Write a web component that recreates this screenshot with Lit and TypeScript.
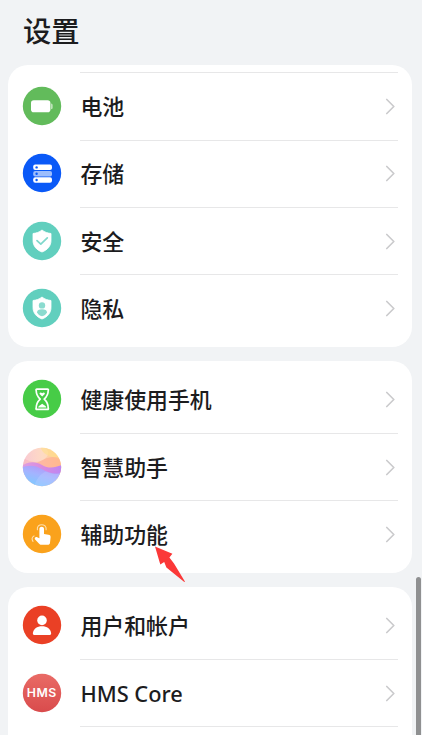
import { LitElement, html, css, svg, type TemplateResult } from "lit";
import { customElement, property } from "lit/decorators.js";

const SHIELD = "M19 8C21.5 10.1 24.8 11.2 28 11.5V18.5C28 24.2 24.3 28 19 30C13.7 28 10 24.2 10 18.5V11.5C13.2 11.2 16.5 10.1 19 8Z";

const icons: Record<string, TemplateResult> = {
  battery: svg`
    <circle cx="19" cy="19" r="19.2" fill="#62bb5b"/>
    <rect x="8" y="13.2" width="19.4" height="12" rx="2.8" fill="#fff"/>
    <path d="M28.1 16.6C29.2 16.8 29.6 17.4 29.6 18.4V20.4C29.6 21.4 29.2 22 28.1 22.2Z" fill="#c9e8c6"/>`,
  storage: svg`
    <circle cx="19" cy="19" r="19.2" fill="#0a59f7"/>
    <rect x="10.2" y="10.6" width="18.8" height="5.5" rx="2" fill="#fff"/>
    <rect x="10.2" y="16.9" width="18.8" height="5.5" rx="2" fill="#9dbdfc"/>
    <rect x="10.2" y="23.2" width="18.8" height="5.5" rx="2" fill="#fff"/>
    <g fill="#0a59f7"><circle cx="13.6" cy="13.4" r="1.2"/><circle cx="13.6" cy="19.7" r="1.2"/><circle cx="13.6" cy="26" r="1.2"/></g>`,
  security: svg`
    <circle cx="19" cy="19" r="19.2" fill="#61cfbe"/>
    <path d=${SHIELD} fill="#fff" stroke="#fff" stroke-width=".8" stroke-linejoin="round"/>
    <path d="M14 18.6L17.8 22.1L24.3 15.8" fill="none" stroke="#7fd8cb" stroke-width="1.7" stroke-linecap="round" stroke-linejoin="round"/>`,
  privacy: svg`
    <circle cx="19" cy="19" r="19.2" fill="#61cfbe"/>
    <path d=${SHIELD} fill="#fff" stroke="#fff" stroke-width=".8" stroke-linejoin="round"/>
    <circle cx="19" cy="16.4" r="3.2" fill="#8bdbcf"/>
    <path d="M14 23.4C14 21.2 16 20.2 19 20.2S24 21.2 24 23.4C23 25.4 21.2 26.7 19 27.3C16.8 26.7 15 25.4 14 23.4Z" fill="#8bdbcf"/>`,
  hourglass: svg`
    <circle cx="19" cy="19" r="19.2" fill="#47cc47"/>
    <path d="M14 9.2H24.4C25.4 9.2 25.6 9.8 25.2 10.6C25.2 14.6 24 16.6 21.2 19.2C24 21.8 25.2 23.9 25.2 28C25.6 28.8 25.4 29.4 24.4 29.4H14C13 29.4 12.8 28.8 13.2 28C13.2 23.9 14.4 21.8 17.2 19.2C14.4 16.6 13.2 14.6 13.2 10.6C12.8 9.8 13 9.2 14 9.2Z" fill="none" stroke="#fff" stroke-width="1.7" stroke-linejoin="round"/>
    <path d="M19.2 16.6L16.8 14.2C15.8 12.8 17.8 11.7 19.2 13.2C20.6 11.7 22.6 12.8 21.6 14.2Z" fill="#fff"/>
    <path d="M15.1 27.6C15.6 25.7 17.4 25.1 19.2 23.8C21 25.1 22.8 25.7 23.3 27.6Z" fill="#fff"/>`,
  assistant: svg`
    <defs>
      <linearGradient id="sky" x1="0" y1=".3" x2="1" y2="0.2"><stop offset="0" stop-color="#f7b9c8"/><stop offset=".5" stop-color="#fdcfb4"/><stop offset="1" stop-color="#ffcf88"/></linearGradient>
      <linearGradient id="ribbon" x1="0" y1="0" x2="1" y2="0"><stop offset="0" stop-color="#dfa0e0"/><stop offset=".5" stop-color="#d98be0"/><stop offset="1" stop-color="#b985f5"/></linearGradient>
      <linearGradient id="sea" x1=".8" y1="0" x2=".3" y2="1"><stop offset="0" stop-color="#ba8ef6"/><stop offset=".45" stop-color="#a3b4ff"/><stop offset="1" stop-color="#72d2ff"/></linearGradient>
      <clipPath id="orb"><circle cx="19" cy="19" r="19.2"/></clipPath>
      <filter id="soft" x="-10%" y="-10%" width="120%" height="120%"><feGaussianBlur stdDeviation=".7"/></filter>
    </defs>
    <g clip-path="url(#orb)">
      <rect x="-1" y="-1" width="40" height="40" fill="url(#sky)"/>
      <g filter="url(#soft)">
        <ellipse cx="12" cy="5" rx="13" ry="9" fill="#fff" opacity=".22"/>
        <path d="M17 -3C18 6 26 9 41 12V-3Z" fill="#ffe08a" opacity=".6"/>
        <path d="M13 15C19 13 23 9 30 9C34 9 37 10 41 12V21H13Z" fill="#ffa48f" opacity=".5"/>
        <path d="M-3 18.5C6 13 12 13 19 17C26 21 32 20 41 16V32H-3Z" fill="url(#ribbon)"/>
        <path d="M-3 20C6 16.5 12 17 19 21C26 25.5 33 27 41 24V42H-3Z" fill="url(#sea)"/>
        <path d="M10 42C13 31 17 26 23 23.5C29 26.5 34 27 41 24V42Z" fill="#c3d0ff" opacity=".3"/>
      </g>
    </g>`,
  touch: svg`
    <circle cx="19" cy="19" r="19.2" fill="#faa21c"/>
    <path d="M16.4 23.2V13.8C16.4 10.9 21 10.9 21 13.8V19.1L25.4 19.7C27.1 19.9 27.8 20.8 27.6 22.5L27 27.7C26.8 29.1 26.1 29.8 24.7 29.8H18.4C17.3 29.8 16.6 29.4 15.9 28.5L12.1 24.4C11 22.9 12.6 21.6 14.2 22.3Z" fill="#fff"/>
    <path d="M14.4 14.8C13.1 8 24.2 8 23.1 14.8" fill="none" stroke="#fff" stroke-opacity=".65" stroke-width="1.1" stroke-linecap="round"/>
    <path d="M11 20.9C8.8 22 8.5 24.3 10 26.4" fill="none" stroke="#fff" stroke-opacity=".65" stroke-width="1.1" stroke-linecap="round"/>`,
  user: svg`
    <circle cx="19" cy="19" r="19.2" fill="#ea4025"/>
    <circle cx="19" cy="14.4" r="4.8" fill="#fff"/>
    <path d="M9.9 27C10.5 22.6 14 20.2 19 20.2S27.5 22.6 28.1 27C28.2 28.4 27.6 29 26.3 29H11.7C10.4 29 9.8 28.4 9.9 27Z" fill="#fff"/>`,
  hms: svg`
    <defs><linearGradient id="coral" x1="0" y1="0" x2="0" y2="1"><stop offset="0" stop-color="#e96b66"/><stop offset="1" stop-color="#d94b4c"/></linearGradient></defs>
    <circle cx="19" cy="19" r="19.2" fill="url(#coral)"/>
    <text class="hms" x="3.8" y="23.4" textLength="29.8" lengthAdjust="spacingAndGlyphs">HMS</text>`,
};

@customElement("setting-row")
class SettingRow extends LitElement {
  @property() icon = "";
  @property() label = "";

  static styles = css`
    :host { display: flex; align-items: center; height: 67.35px; padding: 0 14px 0 15px; box-sizing: border-box; }
    .icon { flex: none; width: 38px; height: 38px; overflow: visible; }
    .body { flex: 1; align-self: stretch; display: flex; align-items: center; justify-content: space-between; margin-left: 19px; padding-left: .4px; border-top: 1px solid transparent; }
    :host([divided]) .body { border-top-color: #e7e7e8; }
    .label { padding-bottom: 1.2px; font-size: 21.9px; line-height: 30px; font-weight: 500; color: #1c1c1e; white-space: nowrap; }
    .latin { padding: 1px 0 0; font-family: "Noto Sans", sans-serif; font-size: 21.8px; }
    .chevron { width: 10px; height: 17px; margin-right: 2.4px; }
    .hms { font: 600 11.4px Inter, sans-serif; letter-spacing: .4px; fill: #fff; }
  `;

  render() {
    const latin = /^[\x00-\x7f]+$/.test(this.label);
    return html`
      <svg class="icon" viewBox="0 0 38 38" aria-hidden="true">${icons[this.icon]}</svg>
      <div class="body">
        <span class="label ${latin ? "latin" : ""}">${this.label}</span>
        <svg class="chevron" viewBox="0 0 10 17" aria-hidden="true">
          <path d="M1.8 1.5L8.8 8.5L1.8 15.5" fill="none" stroke="#cbcbcd" stroke-width="1.7" stroke-linecap="round" stroke-linejoin="round"/>
        </svg>
      </div>`;
  }
}

const groups = [
  [["battery", "电池"], ["storage", "存储"], ["security", "安全"], ["privacy", "隐私"]],
  [["hourglass", "健康使用手机"], ["assistant", "智慧助手"], ["touch", "辅助功能"]],
  [["user", "用户和帐户"], ["hms", "HMS Core"], ["", ""]],
];

@customElement("app-root")
class AppRoot extends LitElement {
  static styles = css`
    :host { display: block; position: relative; height: 735px; overflow: hidden; background: #f1f3f5; font-family: "Noto Sans CJK SC", sans-serif; }
    .title { margin: 0; height: 65px; padding: 10px 0 0 23px; box-sizing: border-box; font-size: 28.3px; line-height: 40px; font-weight: 500; color: #1c1c1e; }
    .groups { display: flex; flex-direction: column; gap: 14px; padding: 0 10.5px 0 8px; }
    .card { background: #fff; border-radius: 20px; padding: 5.1px 0 4.9px; }
    .scrolled { padding: 7.3px 0 5px; }
    .scrollbar { position: absolute; right: 1px; top: 577px; bottom: -6px; width: 5px; border-radius: 3px; background: #8f9091; }
    .arrow { position: absolute; left: 154px; top: 546px; width: 32px; height: 37px; }
  `;

  render() {
    return html`
      <h1 class="title">设置</h1>
      <div class="groups">
        ${groups.map((rows, g) => html`
          <section class="card ${g === 0 ? "scrolled" : ""}">
            ${rows.map(([icon, label], i) => html`
              <setting-row .icon=${icon} .label=${label} ?divided=${i > 0 || g === 0}></setting-row>`)}
          </section>`)}
      </div>
      <svg class="arrow" viewBox="0 0 32 37" aria-hidden="true">
        <path d="M1 .4L18.4 7.7L15.4 11.4L20 17.6L31.2 36L30 35.8L12.4 21.6L10.2 16L6.3 18.6Z" fill="#fb3838"/>
      </svg>
      <div class="scrollbar"></div>`;
  }
}
